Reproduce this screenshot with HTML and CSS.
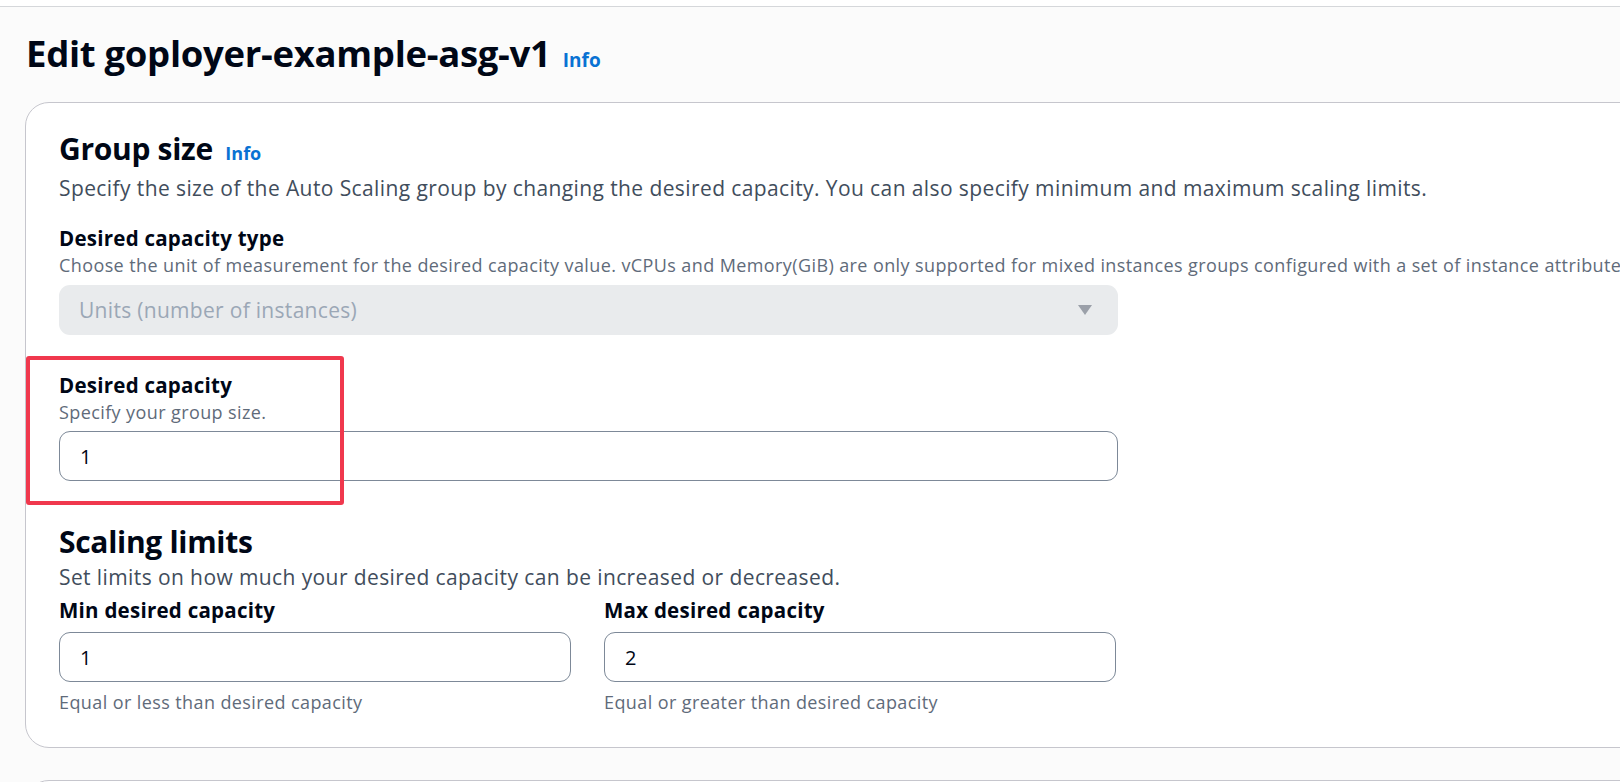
FILE: index.html
```html
<!DOCTYPE html>
<html lang="en">
<head>
<meta charset="utf-8">
<title>Edit goployer-example-asg-v1</title>
<link rel="stylesheet" href="styles.css">
</head>
<body>
<div class="topbar"></div>
<main class="page">
  <h1 class="title">Edit goployer-example-asg-v1 <a class="info" href="#">Info</a></h1>

  <section class="card">
    <h2 class="heading">Group size <a class="info info-sm" href="#">Info</a></h2>
    <p class="desc desc-first">Specify the size of the Auto Scaling group by changing the desired capacity. You can also specify minimum and maximum scaling limits.</p>

    <div class="field field-type">
      <div class="label">Desired capacity type</div>
      <div class="hint">Choose the unit of measurement for the desired capacity value. vCPUs and Memory(GiB) are only supported for mixed instances groups configured with a set of instance attributes.</div>
      <div class="select">
        <span class="select-text">Units (number of instances)</span>
        <svg class="caret" width="16" height="12" viewBox="0 0 16 12"><path d="M1 1 H15 L8 11 Z" fill="#9ba0a9"/></svg>
      </div>
    </div>

    <div class="field field-desired">
      <div class="label">Desired capacity</div>
      <div class="hint">Specify your group size.</div>
      <div class="input">1</div>
      <div class="highlight"></div>
    </div>

    <h2 class="heading heading-limits">Scaling limits</h2>
    <p class="desc desc-limits">Set limits on how much your desired capacity can be increased or decreased.</p>

    <div class="limits">
      <div class="limit">
        <div class="label">Min desired capacity</div>
        <div class="input">1</div>
        <div class="hint hint-after">Equal or less than desired capacity</div>
      </div>
      <div class="limit">
        <div class="label">Max desired capacity</div>
        <div class="input">2</div>
        <div class="hint hint-after">Equal or greater than desired capacity</div>
      </div>
    </div>
  </section>

  <section class="card card-next"></section>
</main>
</body>
</html>
```

FILE: styles.css
```css
* { box-sizing: border-box; }
html, body { margin: 0; padding: 0; }
body {
  background: #fbfbfb;
  font-family: "Open Sans", "Noto Sans", "Liberation Sans", sans-serif;
  color: #000716;
  width: 1620px;
  height: 782px;
  overflow: hidden;
}
.topbar {
  height: 7px;
  background: #ffffff;
  border-bottom: 1px solid #d5d7da;
}
.page {
  padding-left: 25px;
}
.title {
  margin: 0;
  padding-top: 24px;
  padding-left: 1px;
  font-size: 36.5px;
  line-height: 44px;
  font-weight: 700;
  letter-spacing: -0.3px;
  color: #000716;
}
.info {
  font-size: 19px;
  font-weight: 700;
  color: #0972d3;
  text-decoration: none;
  margin-left: 3px;
  letter-spacing: 0;
}
.info-sm { font-size: 18px; margin-left: 5px; }
.card {
  margin-top: 20px;
  margin-right: -60px;
  background: #ffffff;
  border: 1px solid #c6c6cd;
  border-radius: 24px;
  padding: 27px 0 34px 33px;
}
.heading {
  margin: 0;
  font-size: 30px;
  line-height: 38px;
  font-weight: 700;
  letter-spacing: -0.3px;
}
.desc {
  margin: 3px 0 0;
  font-size: 21px;
  line-height: 26px;
  letter-spacing: 0.4px;
  color: #414d5c;
}
.desc-limits { margin-top: 3px; }
.field { position: relative; width: 1059px; }
.field-type { margin-top: 24px; }
.field-desired { margin-top: 37px; }
.label {
  font-size: 20.5px;
  line-height: 26px;
  font-weight: 700;
  letter-spacing: 0.25px;
  color: #000716;
}
.hint {
  margin-top: 3px;
  font-size: 18px;
  line-height: 22px;
  letter-spacing: 0.4px;
  color: #5f6b7a;
  white-space: nowrap;
}
.select {
  margin-top: 9px;
  height: 50px;
  border-radius: 11px;
  background: #e9ebed;
  display: flex;
  align-items: center;
  justify-content: space-between;
  padding: 0 25px 0 20px;
}
.select-text {
  font-size: 21px;
  letter-spacing: 0.3px;
  color: #9ba7b6;
}
.caret { display: block; }
.input {
  margin-top: 8px;
  height: 50px;
  border: 1px solid #7d8998;
  border-radius: 11px;
  background: #ffffff;
  display: flex;
  align-items: center;
  padding-left: 20px;
  font-size: 20px;
  color: #000716;
}
.highlight {
  position: absolute;
  left: -33px;
  top: -16px;
  width: 318px;
  height: 149px;
  border: 4px solid #f0384d;
  border-radius: 3px;
  pointer-events: none;
}
.heading-limits { margin-top: 42px; }
.limits {
  margin-top: 7px;
  width: 1059px;
  display: grid;
  grid-template-columns: 512px 512px;
  column-gap: 33px;
}
.limit .input { margin-top: 9px; }
.hint-after { margin-top: 9px; }
.card-next {
  margin-top: 32px;
  height: 80px;
  padding: 0;
}
```
